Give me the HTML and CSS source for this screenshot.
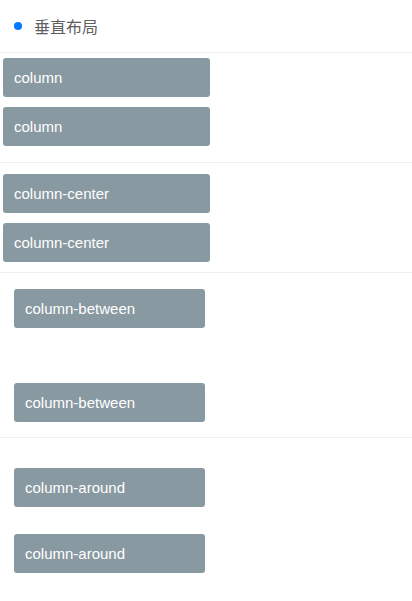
FILE: index.html
```html
<!DOCTYPE html>
<html lang="zh">
<head>
<meta charset="utf-8">
<link rel="stylesheet" href="styles.css">
</head>
<body>
<div class="header">
  <span class="dot"></span>
  <span class="title">垂直布局</span>
</div>
<div class="section sec-start">
  <div class="item narrow">column</div>
  <div class="item narrow">column</div>
</div>
<div class="section sec-center">
  <div class="item narrow">column-center</div>
  <div class="item narrow">column-center</div>
</div>
<div class="section sec-between">
  <div class="item wide">column-between</div>
  <div class="item wide">column-between</div>
</div>
<div class="section sec-around">
  <div class="item wide">column-around</div>
  <div class="item wide">column-around</div>
</div>
</body>
</html>
```
FILE: styles.css
```css
html, body {
  margin: 0;
  padding: 0;
  background: #ffffff;
}
body {
  font-family: "Liberation Sans", Arial, "Noto Sans CJK SC", sans-serif;
  width: 412px;
  height: 601px;
  overflow: hidden;
}
.header {
  display: flex;
  align-items: center;
  padding-left: 14px;
  box-sizing: border-box;
  border-bottom: 1px solid #eeeeee;
  height: 53px;
}
.dot {
  width: 8px;
  height: 8px;
  border-radius: 50%;
  background: #007aff;
  margin-right: 12px;
}
.title {
  font-family: "Noto Sans CJK SC", sans-serif;
  font-size: 16px;
  color: #606060;
  line-height: 20px;
}
.section {
  display: flex;
  flex-direction: column;
  border-bottom: 1px solid #eeeeee;
  box-sizing: border-box;
}
.item {
  height: 39px;
  background: #8899a1;
  border-radius: 3px;
  color: #ffffff;
  font-size: 15px;
  display: flex;
  align-items: center;
  padding-left: 11px;
  box-sizing: border-box;
  margin: 5px 0;
}
.narrow {
  margin-left: 3px;
  width: 207px;
}
.wide {
  margin-left: 14px;
  width: 191px;
}
.sec-start {
  height: 110px;
  justify-content: flex-start;
}
.sec-center {
  height: 110px;
  justify-content: center;
  padding-top: 1px;
}
.sec-between {
  height: 165px;
  justify-content: space-between;
  padding: 11px 0 10px;
}
.sec-around {
  height: 163px;
  justify-content: space-around;
  padding: 17px 0 15px;
  border-bottom: none;
}
```
